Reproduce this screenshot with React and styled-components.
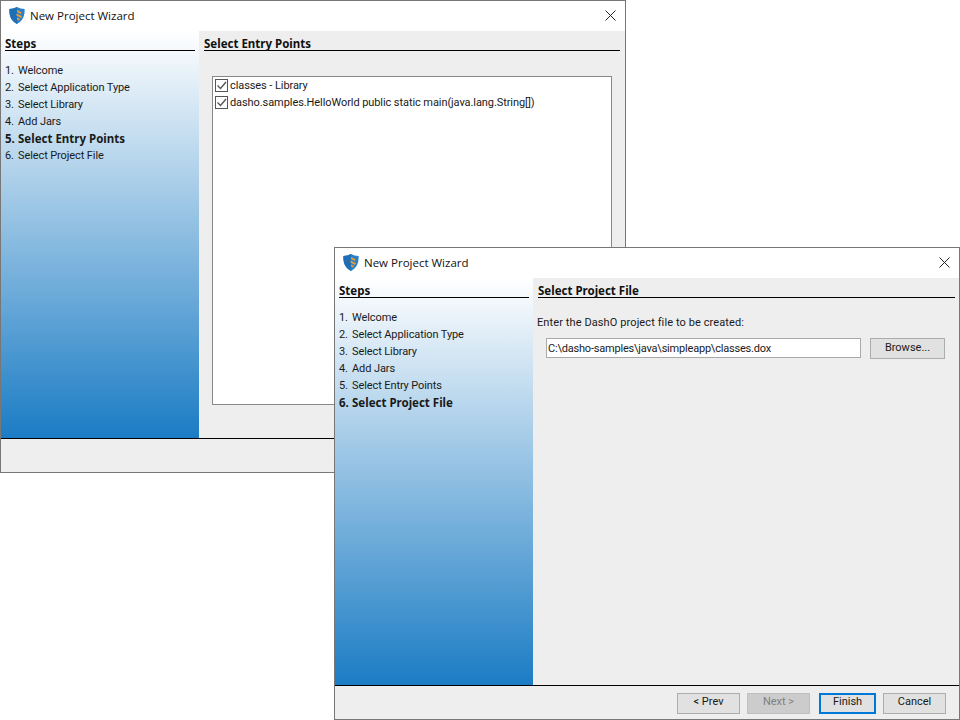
import React from 'react';
import styled, { createGlobalStyle } from 'styled-components';

const steps = ['Welcome', 'Select Application Type', 'Select Library', 'Add Jars', 'Select Entry Points', 'Select Project File'];

const Shield = () => (
  <svg width="16" height="17" viewBox="0 0 16 17">
    <path d="M8 0 C5.8 1.3 3 2 0.4 2 C0.2 8 1.5 13.6 8 17 C14.5 13.6 15.8 8 15.6 2 C13 2 10.2 1.3 8 0 Z" fill="#2a80c6" />
    <path d="M8 0 C5.8 1.3 3 2 0.4 2 C0.2 8 1.5 13.6 8 17 Z" fill="#1f6fb4" />
    <path d="M8 3 L12.5 5.2 L12 7 L8 5 Z M7.5 6.6 L13 9.2 L12.2 11 L7.5 8.6 Z M8 10.5 L11 12 L9.8 13.6 L8 12.6 Z" fill="#f09a33" />
  </svg>
);

const Close = () => (
  <svg width="11" height="11" viewBox="0 0 11 11">
    <path d="M0.5 0.5 L10.5 10.5 M10.5 0.5 L0.5 10.5" stroke="#222" strokeWidth="1" fill="none" />
  </svg>
);

const Tick = () => (
  <svg width="11" height="11" viewBox="0 0 11 11">
    <path d="M1.5 5.5 L4.5 8.5 L10 2" stroke="#555" strokeWidth="1.4" fill="none" />
  </svg>
);

const Wizard = ({ x, y, active, heading, children, footer }) => (
  <Window $x={x} $y={y}>
    <TitleBar>
      <Shield />
      <Title>New Project Wizard</Title>
      <CloseButton>
        <Close />
      </CloseButton>
    </TitleBar>
    <Body>
      <Sidebar>
        <SideHeading>Steps</SideHeading>
        <StepList>
          {steps.map((step, i) => (
            <Step key={step} $active={i === active}>
              <StepNumber>{i + 1}.</StepNumber>
              {step}
            </Step>
          ))}
        </StepList>
      </Sidebar>
      <Content>
        <ContentHeading>{heading}</ContentHeading>
        {children}
      </Content>
    </Body>
    <Footer>{footer}</Footer>
  </Window>
);

const App = () => (
  <>
    <GlobalStyle />
    <Desktop>
      <Wizard x={0} y={0} active={4} heading="Select Entry Points">
        <EntryList>
          <EntryRow>
            <CheckBox>
              <Tick />
            </CheckBox>
            classes - Library
          </EntryRow>
          <EntryRow>
            <CheckBox>
              <Tick />
            </CheckBox>
            dasho.samples.HelloWorld public static main(java.lang.String[])
          </EntryRow>
        </EntryList>
      </Wizard>
      <Wizard
        x={334}
        y={247}
        active={5}
        heading="Select Project File"
        footer={
          <>
            <Button>&lt; Prev</Button>
            <Button disabled>Next &gt;</Button>
            <FinishButton>Finish</FinishButton>
            <Button>Cancel</Button>
          </>
        }
      >
        <FileLabel>Enter the DashO project file to be created:</FileLabel>
        <FileRow>
          <FileInput readOnly value="C:\dasho-samples\java\simpleapp\classes.dox" />
          <BrowseButton>Browse...</BrowseButton>
        </FileRow>
      </Wizard>
    </Desktop>
  </>
);

const GlobalStyle = createGlobalStyle`
  html, body {
    margin: 0;
    padding: 0;
    background: #fff;
  }
  * {
    box-sizing: border-box;
  }
`;

const Desktop = styled.div`
  position: relative;
  width: 960px;
  height: 720px;
  overflow: hidden;
  background: #fff;
  font-family: Roboto, sans-serif;
  font-size: 11px;
  color: #1a1a1a;
`;

const Window = styled.div`
  position: absolute;
  left: ${({ $x }) => $x}px;
  top: ${({ $y }) => $y}px;
  width: 626px;
  height: 473px;
  display: flex;
  flex-direction: column;
  border: 1px solid #777;
  background: #eee;
`;

const TitleBar = styled.div`
  height: 30px;
  flex: none;
  display: flex;
  align-items: center;
  padding: 0 9px 1px 8px;
  background: #fff;
`;

const Title = styled.div`
  margin-left: 5px;
  font-family: 'Open Sans', sans-serif;
  font-size: 11.5px;
  color: #111;
`;

const CloseButton = styled.div`
  margin-left: auto;
  display: flex;
`;

const Body = styled.div`
  flex: 1;
  display: flex;
  min-height: 0;
  border-bottom: 1px solid #000;
`;

const Sidebar = styled.div`
  width: 198px;
  flex: none;
  padding: 6px 4px 0 4px;
  background: linear-gradient(#fff, #1b7cc4);
`;

const SideHeading = styled.div`
  height: 14px;
  line-height: 13px;
  font-family: 'Noto Sans', sans-serif;
  font-size: 11.5px;
  font-weight: 700;
  color: #111;
  border-bottom: 1px solid #000;
`;

const StepList = styled.div`
  margin-top: 11px;
  display: flex;
  flex-direction: column;
`;

const Step = styled.div`
  height: 17px;
  line-height: 17px;
  font-family: ${({ $active }) => ($active ? "'Noto Sans', sans-serif" : 'inherit')};
  font-size: ${({ $active }) => ($active ? '11.5px' : 'inherit')};
  font-weight: ${({ $active }) => ($active ? 700 : 400)};
  letter-spacing: ${({ $active }) => ($active ? 0 : '-0.1px')};
  white-space: nowrap;
`;

const StepNumber = styled.span`
  display: inline-block;
  width: 13px;
`;

const Content = styled.div`
  flex: 1;
  display: flex;
  flex-direction: column;
  padding: 6px 5px 0 5px;
`;

const ContentHeading = styled(SideHeading)``;

const EntryList = styled.div`
  margin: 25px 8px 33px 8px;
  flex: 1;
  padding: 0 2px;
  background: #fff;
  border: 1px solid #888;
`;

const EntryRow = styled.div`
  height: 17px;
  display: flex;
  align-items: center;
  gap: 2px;
  letter-spacing: -0.08px;
  white-space: nowrap;
`;

const CheckBox = styled.div`
  width: 13px;
  height: 13px;
  display: flex;
  align-items: center;
  justify-content: center;
  background: #fff;
  border: 1px solid #555;
`;

const FileLabel = styled.div`
  margin: 16px 0 0 -1px;
  height: 17px;
  line-height: 17px;
  letter-spacing: 0.1px;
`;

const FileRow = styled.div`
  margin: 7px 10px 0 8px;
  display: flex;
  align-items: flex-start;
  gap: 9px;
`;

const FileInput = styled.input`
  width: 315px;
  height: 20px;
  padding: 0 1px;
  font: inherit;
  letter-spacing: -0.2px;
  color: inherit;
  background: #fff;
  border: 1px solid #a9a9a9;
  outline: none;
`;

const Footer = styled.div`
  height: 33px;
  flex: none;
  display: flex;
  align-items: center;
  justify-content: flex-end;
  gap: 7px;
  padding: 1px 13px 0 0;
`;

const Button = styled.button`
  width: 63px;
  height: 21px;
  padding: 0 0 3px;
  font: inherit;
  color: ${({ disabled }) => (disabled ? '#808080' : '#1a1a1a')};
  background: ${({ disabled }) => (disabled ? '#ccc' : '#e1e1e1')};
  border: 1px solid ${({ disabled }) => (disabled ? '#bfbfbf' : '#adadad')};
`;

const FinishButton = styled(Button)`
  width: 57px;
  margin-left: 2px;
  border: 2px solid #0078d7;
`;

const BrowseButton = styled(Button)`
  width: 75px;
`;

export default App;
